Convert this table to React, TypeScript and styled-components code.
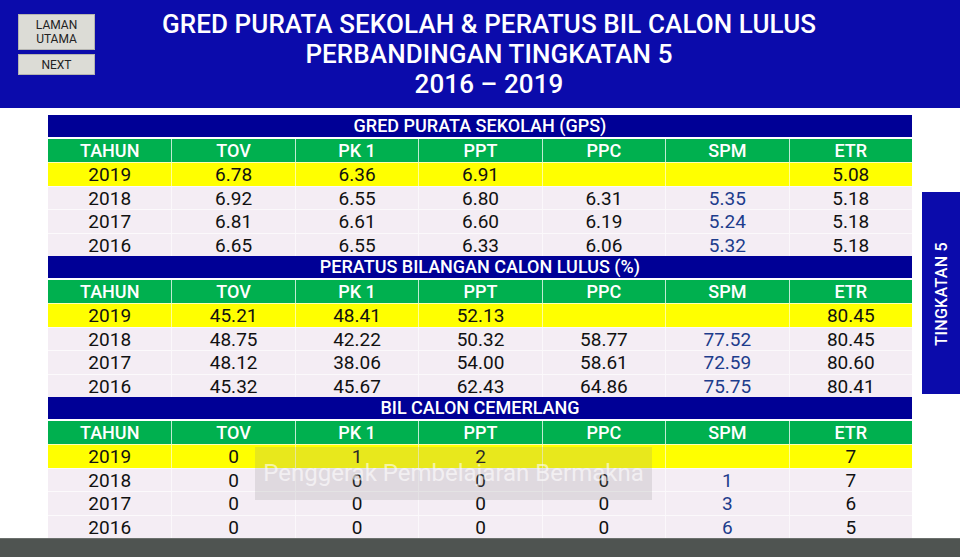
import React from 'react';
import styled, { createGlobalStyle } from 'styled-components';

type Row = { year: string; values: string[] };

interface Section {
  title: string;
  rows: Row[];
}

const columns = ['TAHUN', 'TOV', 'PK 1', 'PPT', 'PPC', 'SPM', 'ETR'];

const sections: Section[] = [
  {
    title: 'GRED PURATA SEKOLAH (GPS)',
    rows: [
      { year: '2019', values: ['6.78', '6.36', '6.91', '', '', '5.08'] },
      { year: '2018', values: ['6.92', '6.55', '6.80', '6.31', '5.35', '5.18'] },
      { year: '2017', values: ['6.81', '6.61', '6.60', '6.19', '5.24', '5.18'] },
      { year: '2016', values: ['6.65', '6.55', '6.33', '6.06', '5.32', '5.18'] },
    ],
  },
  {
    title: 'PERATUS BILANGAN CALON LULUS (%)',
    rows: [
      { year: '2019', values: ['45.21', '48.41', '52.13', '', '', '80.45'] },
      { year: '2018', values: ['48.75', '42.22', '50.32', '58.77', '77.52', '80.45'] },
      { year: '2017', values: ['48.12', '38.06', '54.00', '58.61', '72.59', '80.60'] },
      { year: '2016', values: ['45.32', '45.67', '62.43', '64.86', '75.75', '80.41'] },
    ],
  },
  {
    title: 'BIL CALON CEMERLANG',
    rows: [
      { year: '2019', values: ['0', '1', '2', '', '', '7'] },
      { year: '2018', values: ['0', '0', '0', '0', '1', '7'] },
      { year: '2017', values: ['0', '0', '0', '0', '3', '6'] },
      { year: '2016', values: ['0', '0', '0', '0', '6', '5'] },
    ],
  },
];

const GlobalStyle = createGlobalStyle`
  html, body {
    margin: 0;
    padding: 0;
    background: #ffffff;
  }
  body {
    font-family: Roboto, 'Liberation Sans', sans-serif;
  }
`;

const App = () => (
  <Page>
    <GlobalStyle />
    <Header>
      <NavButtons>
        <NavButton tall>
          LAMAN
          <br />
          UTAMA
        </NavButton>
        <NavButton>NEXT</NavButton>
      </NavButtons>
      <Title>
        GRED PURATA SEKOLAH &amp; PERATUS BIL CALON LULUS
        <br />
        PERBANDINGAN TINGKATAN 5
        <br />
        2016 – 2019
      </Title>
      <div />
    </Header>

    <Body>
      <TableWrap>
        <Table>
          {sections.map(section => (
            <React.Fragment key={section.title}>
              <SectionTitle>{section.title}</SectionTitle>
              {columns.map((col, i) => (
                <HeadCell key={col} first={i === 0}>
                  {col}
                </HeadCell>
              ))}
              {section.rows.map((row, r) => (
                <React.Fragment key={row.year}>
                  <Cell highlight={r === 0} first>
                    {row.year}
                  </Cell>
                  {row.values.map((v, i) => (
                    <Cell key={i} highlight={r === 0} accent={i === 4 && r > 0}>
                      {v}
                    </Cell>
                  ))}
                </React.Fragment>
              ))}
            </React.Fragment>
          ))}
        </Table>
        <Banner>Penggerak Pembelajaran Bermakna</Banner>
      </TableWrap>
      <SideTab>
        <SideText>TINGKATAN 5</SideText>
      </SideTab>
    </Body>

    <Footer />
  </Page>
);

const Page = styled.div`
  width: 960px;
  height: 557px;
  display: flex;
  flex-direction: column;
  overflow: hidden;
  background: #ffffff;
`;

const Header = styled.div`
  height: 110px;
  background: #0b0bab;
  display: grid;
  grid-template-columns: 1fr auto 1fr;
  box-sizing: border-box;
  padding: 14px 0 0 18px;
`;

const NavButtons = styled.div`
  display: flex;
  flex-direction: column;
  gap: 4px;
`;

const NavButton = styled.div<{ tall?: boolean }>`
  width: 77px;
  height: ${p => (p.tall ? '36px' : '21px')};
  box-sizing: border-box;
  background: #dcdcd6;
  border: 1px solid #b5b5b0;
  color: #222222;
  font-size: 12px;
  line-height: 14px;
  text-align: center;
  display: flex;
  align-items: center;
  justify-content: center;
`;

const Title = styled.div`
  color: #ffffff;
  font-size: 26px;
  font-weight: 500;
  line-height: 30px;
  text-align: center;
  margin-top: -5px;
  letter-spacing: 0.1px;
`;

const Body = styled.div`
  flex: 1;
  display: flex;
  align-items: flex-start;
  padding-top: 7px;
`;

const TableWrap = styled.div`
  position: relative;
  margin-left: 48px;
  width: 864px;
`;

const Table = styled.div`
  display: grid;
  grid-template-columns: repeat(7, 1fr);
  grid-auto-rows: 23.5px;
`;

const SectionTitle = styled.div`
  grid-column: 1 / -1;
  background: #000096;
  color: #ffffff;
  font-size: 18px;
  font-weight: 500;
  text-align: center;
  line-height: 21px;
  border-bottom: 2.5px solid #ffffff;
`;

const HeadCell = styled.div<{ first?: boolean }>`
  background: #00b04f;
  color: #ffffff;
  font-size: 18px;
  font-weight: 500;
  display: flex;
  align-items: center;
  justify-content: center;
  border-left: ${p => (p.first ? 'none' : '1px solid rgba(255, 255, 255, 0.75)')};
`;

const Cell = styled.div<{ highlight?: boolean; accent?: boolean; first?: boolean }>`
  background: ${p => (p.highlight ? '#ffff00' : '#f4edf4')};
  color: ${p => (p.accent ? '#1d3c8c' : '#111111')};
  font-size: 19px;
  display: flex;
  align-items: center;
  justify-content: center;
  border-top: 1px solid rgba(255, 255, 255, 0.7);
  border-left: ${p => (p.first ? 'none' : '1px solid rgba(255, 255, 255, 0.6)')};
  box-sizing: border-box;
`;

const Banner = styled.div`
  position: absolute;
  left: 207px;
  top: 332px;
  width: 397px;
  height: 53px;
  background: rgba(140, 140, 140, 0.2);
  color: rgba(255, 255, 255, 0.6);
  font-size: 24px;
  line-height: 53px;
  text-align: center;
  white-space: nowrap;
  pointer-events: none;
`;

const SideTab = styled.div`
  margin-left: 10px;
  margin-top: 77px;
  flex: 1;
  height: 202px;
  background: #0b0bab;
  display: flex;
  align-items: center;
  justify-content: center;
`;

const SideText = styled.div`
  writing-mode: vertical-rl;
  transform: rotate(180deg);
  color: #ffffff;
  font-size: 16px;
  font-weight: 500;
  letter-spacing: 0.3px;
`;

const Footer = styled.div`
  height: 18px;
  background: #4f5451;
  border-top: 1px solid #6b706d;
`;

export default App;
